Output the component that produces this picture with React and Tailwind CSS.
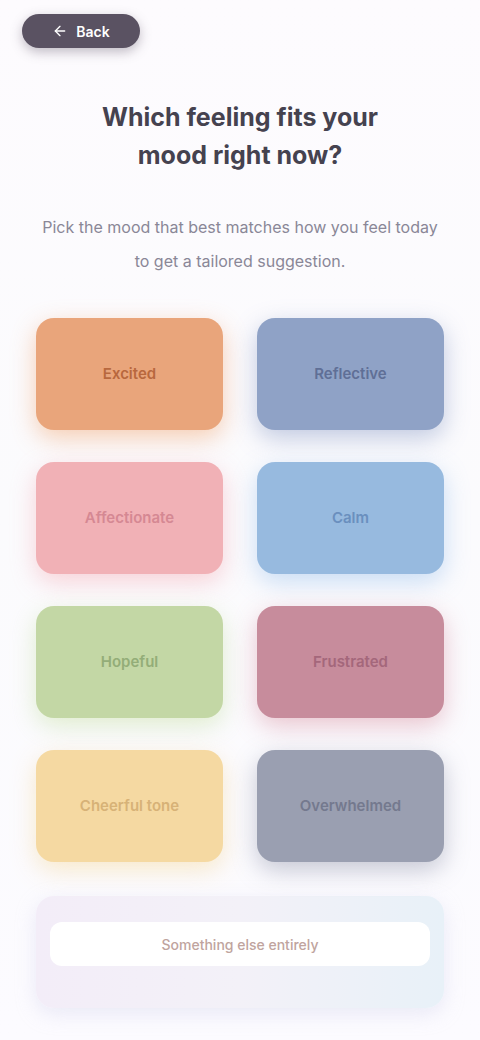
import { ArrowLeft } from 'lucide-react';

const moods = [
  { label: 'Excited', tile: 'bg-[#e9a57b] text-[#b8683e] shadow-[0_8px_24px_rgba(240,150,90,0.45)]' },
  { label: 'Reflective', tile: 'bg-[#8fa2c6] text-[#5f6f96] shadow-[0_8px_24px_rgba(120,140,190,0.45)]' },
  { label: 'Affectionate', tile: 'bg-[#f1b1b6] text-[#d58893] shadow-[0_8px_24px_rgba(245,160,170,0.45)]' },
  { label: 'Calm', tile: 'bg-[#97badf] text-[#6a8fbe] shadow-[0_8px_24px_rgba(140,185,235,0.45)]' },
  { label: 'Hopeful', tile: 'bg-[#c3d7a5] text-[#93ad78] shadow-[0_8px_24px_rgba(190,220,150,0.45)]' },
  { label: 'Frustrated', tile: 'bg-[#c78c9c] text-[#a4677b] shadow-[0_8px_24px_rgba(210,130,150,0.45)]' },
  { label: 'Cheerful tone', tile: 'bg-[#f5d9a2] text-[#d7b277] shadow-[0_8px_24px_rgba(245,210,140,0.45)]' },
  { label: 'Overwhelmed', tile: 'bg-[#9a9fb1] text-[#74798e] shadow-[0_8px_24px_rgba(130,135,160,0.45)]' },
];

export default function App() {
  return (
    <div className="min-h-[1040px] w-[480px] bg-gradient-to-b from-[#fdfbfe] via-[#fbfbfd] to-[#fcfbff] font-['Inter','Noto_Sans',sans-serif]">
      <div className="px-[22px] pt-[14px]">
        <button className="flex h-[34px] w-[118px] items-center justify-center gap-2 rounded-full bg-[#5a5262] text-[14px] font-semibold text-white shadow-[0_4px_12px_rgba(80,70,90,0.35)]">
          <ArrowLeft className="h-4 w-4" />
          Back
        </button>
      </div>

      <h1 className="mx-auto mt-[50px] max-w-[340px] text-center text-[25px] font-bold leading-[38px] text-[#45424f]">
        Which feeling fits your mood right now?
      </h1>

      <p className="mx-auto mt-[36px] max-w-[410px] text-center text-[16px] leading-[34px] text-[#8a8797]">
        Pick the mood that best matches how you feel today to get a tailored suggestion.
      </p>

      <div className="mt-[40px] grid grid-cols-2 gap-x-[34px] gap-y-[32px] px-9">
        {moods.map((m) => (
          <button
            key={m.label}
            className={`flex h-[112px] items-center justify-center rounded-[18px] text-[15px] font-semibold ${m.tile}`}
          >
            {m.label}
          </button>
        ))}
      </div>

      <div className="mx-9 mt-[34px] rounded-[18px] bg-gradient-to-r from-[#f3edf8] via-[#f3f1f8] to-[#e8f1f8] px-[14px] pb-[42px] pt-[26px] shadow-[0_6px_20px_rgba(200,200,230,0.35)]">
        <button className="flex h-[44px] w-full items-center justify-center rounded-[12px] bg-white text-[14px] font-medium text-[#c0a49e]">
          Something else entirely
        </button>
      </div>
    </div>
  );
}
